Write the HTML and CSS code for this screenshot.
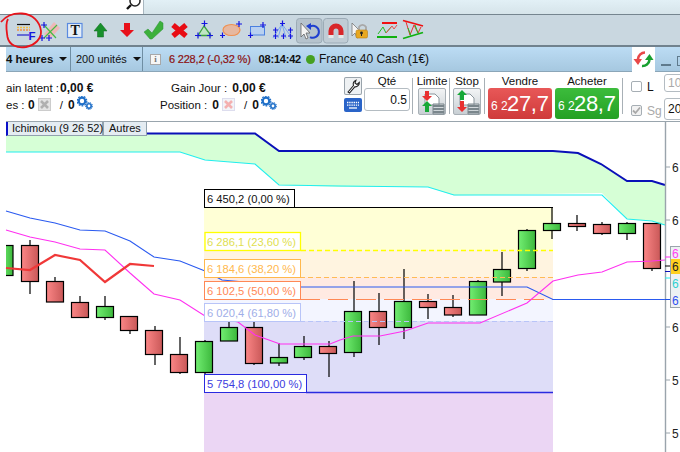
FILE: index.html
```html
<!DOCTYPE html>
<html lang="fr">
<head>
<meta charset="utf-8">
<title>Graphique France 40 Cash</title>
<link rel="stylesheet" href="styles.css">
</head>
<body>
<div class="page">
  <div class="top">
    <div class="search">
      <svg class="search-icon" viewBox="120 0 23 14" width="23" height="14"><circle cx="135" cy="1" r="5" fill="none" stroke="#222" stroke-width="1.5"/><path d="M131 5L127 9" stroke="#111" stroke-width="2.4"/></svg>
    </div>
    <div class="top-rest"></div>
  </div>

  <div class="toolbar">
    <svg class="ti" viewBox="13 15 26 30"><path d="M17 24.500H30" stroke="#111" stroke-width="1.200"/><path d="M17 27.500H30" stroke="#f5c040" stroke-width="1.500" stroke-dasharray="2 1"/><path d="M17 30H30" stroke="#f59040" stroke-width="1.500" stroke-dasharray="2 1"/><path d="M17 35H29" stroke="#2222cc" stroke-width="1.200"/><text x="28.500" y="39.500" class="ti-f">F</text></svg>
    <svg class="ti" viewBox="39 15 26 30"><path d="M44 34L54 22L60 28L50 39Z" fill="#eeb8b8"/><path d="M44 25L56 38M44 38L57 25" stroke="#44bb44" stroke-width="1.200"/><path class="plus" d="M44 22V28M41 25H47M42 35V41M39 38H45M49 35V41M46 38H52"/></svg>
    <svg class="ti" viewBox="65 15 26 30"><rect x="67.500" y="23.500" width="14.500" height="14" fill="#e6eef7" stroke="#5a8ae0" stroke-width="1.200"/><text x="70.500" y="35" class="ti-t">T</text></svg>
    <svg class="ti" viewBox="91 15 26 30"><path d="M100.500 23L107 31H103.500V37H97.500V31H94Z" fill="#18902c" stroke="#0c6a1c" stroke-width=".5"/></svg>
    <svg class="ti" viewBox="117 15 26 30"><path d="M124 23H130V30H134L127 37L120 30H124Z" fill="#e8101a"/></svg>
    <svg class="ti" viewBox="143 15 26 30"><path d="M144 32L148 29L152 33L160 21L163 23V29L152 39H150Z" fill="#3cb03c" stroke="#2a9030" stroke-width=".5"/></svg>
    <svg class="ti" viewBox="169 15 26 30"><path d="M173 25L186 36M186 25L173 36" stroke="#e80c14" stroke-width="5.400"/></svg>
    <svg class="ti" viewBox="195 15 26 30"><path d="M204 26L198 35.500H211Z" fill="#bfe6c4" stroke="#3aa040" stroke-width="1.300"/><path class="plus" d="M204.500 20.500V26.500M201.500 23.500H207.500M198 32.500V38.500M195 35.500H201M210 32.500V38.500M207 35.500H213"/></svg>
    <svg class="ti" viewBox="221 15 26 30"><ellipse cx="231.500" cy="30" rx="8.500" ry="5.500" fill="#e6b8a0" stroke="#f09050" stroke-width="1.200"/><path class="plus" d="M222.500 32.500V38M220 35.500H225M239 21V27M236 24H242"/></svg>
    <svg class="ti" viewBox="247 15 26 30"><rect x="250.500" y="26.500" width="14" height="8.500" fill="#b8d0f0" stroke="#4a80e0"/><path class="plus" d="M250.500 32.500V38M248 35.500H253M263 22V28M260 25H266"/></svg>
    <svg class="ti" viewBox="273 15 26 30"><path d="M282 24L273 38M282 24L278 38M282 24L286 38M282 24L292 38" stroke="#7aa8f0" fill="none"/><path class="plus" d="M282.500 20.500V26M280 23.500H285M275.500 27.500V33M273 30H278M290.500 27.500V33M288 30H293M275.500 33.500V39M273 36H278M283.500 33.500V39M281 36H286M290.500 33.500V39M288 36H293"/></svg>
    <svg class="ti" viewBox="299 15 26 30"><rect x="296.500" y="18.500" width="25.500" height="24.500" rx="3" fill="#b6c3cd" stroke="#9cabb6"/><path d="M301 23V37L304 34L306 39L308 38L306 33H310Z" fill="#f4f4f4" stroke="#666" stroke-width=".8"/><path d="M310 26.500A6 6 0 1 1 310 37" fill="none" stroke="#1f3fd0" stroke-width="2"/><path d="M306 26L311 23V30Z" fill="#1f3fd0"/></svg>
    <svg class="ti" viewBox="325 15 26 30"><rect x="323.500" y="18.500" width="24.500" height="24.500" rx="3" fill="#c0ccd5" stroke="#9cabb6"/><path d="M331 35V31A5 5 0 0 1 341 31V35" fill="none" stroke="#d8262a" stroke-width="5"/><path d="M331 35V38M341 35V38" stroke="#e8e8e8" stroke-width="5"/></svg>
    <svg class="ti" viewBox="351 15 26 30"><path d="M352 23V36L355 33L357 38L359 37L357 32H361Z" fill="#f4f4f4" stroke="#777" stroke-width=".8"/><path d="M359 30V27A4 4 0 0 1 366 27V30" fill="none" stroke="#a8a8a8" stroke-width="1.800"/><rect x="356" y="30" width="11.500" height="8" rx="1.500" fill="#e8a820" stroke="#b87c10" stroke-width=".6"/><circle cx="361.500" cy="33" r="1.400" fill="#222"/><path d="M361.500 33V36" stroke="#222"/></svg>
    <svg class="ti" viewBox="377 15 26 30"><path d="M382 23H397" stroke="#f01010" stroke-width="2"/><path d="M377 37H397" stroke="#10b010" stroke-width="2"/><path d="M378 34L383 27L386 33L391 27" fill="none" stroke="#22bb22"/><path d="M386 33L392 26L394 29L397 25" fill="none" stroke="#e85050"/></svg>
    <svg class="ti" viewBox="403 15 26 30"><path d="M403 20.500L423 26" stroke="#f01010" stroke-width="1.800"/><path d="M403 38.500L423 32.500" stroke="#10b010" stroke-width="1.800"/><path d="M406 22L410 35L414 25L418 33L421 27" fill="none" stroke="#e83030"/><path d="M408 28L411 36M415 25L418 33" stroke="#22bb22" fill="none"/></svg>
  </div>

  <div class="tabbar">
    <div class="seg seg-period"><b class="period-text">4 heures</b><span class="caret"></span></div>
    <div class="seg seg-units"><span class="units-text">200 unités</span><span class="caret"></span></div>
    <div class="seg seg-quote">
      <span class="info-icon">i</span>
      <span class="quote-price">6 228,2 (-0,32 %)</span>
      <b class="quote-time">08:14:42</b>
      <span class="dot"></span>
      <span class="quote-name">France 40 Cash (1€)</span>
    </div>
    <div class="refresh">
      <svg viewBox="632 47 23 25" width="23" height="25"><path d="M645 52.500A7 7 0 0 0 638 59" fill="none" stroke="#e84848" stroke-width="2.600"/><path d="M633.500 59H642L638 65Z" fill="#e84848"/><path d="M642 66A7 7 0 0 0 649.500 60" fill="none" stroke="#18a030" stroke-width="2.600"/><path d="M645 60H653.500L649.500 54Z" fill="#18a030"/></svg>
    </div>
    <div class="win-btns"><span class="min"></span><span class="max"></span></div>
  </div>

  <div class="info">
    <div class="account">
      <div class="acct-row">
        <div class="cell cell-a1"><span class="lbl-latent">ain latent :</span><b class="val">0,00 €</b></div>
        <div class="cell"><span>Gain Jour :</span><b class="val">0,00 €</b></div>
      </div>
      <div class="acct-row row2">
        <div class="cell cell-a2"><span class="lbl-es">es :</span><b class="val">0</b>
          <svg class="x-ico" viewBox="0 0 13 13" width="13" height="13"><rect x=".5" y=".5" width="12" height="12" fill="#e4e4e4" stroke="#ccc"/><path d="M3 3L10 10M10 3L3 10" stroke="#b0b0b0" stroke-width="2.600"/></svg>
          <span class="slash">/</span><b class="val0">0</b>
          <svg class="gears" viewBox="0 0 16 14" width="16" height="14"><circle cx="5" cy="5" r="3.300" fill="none" stroke="#1f6fc8" stroke-width="2.200"/><circle cx="5" cy="5" r="4.800" fill="none" stroke="#1f6fc8" stroke-width="1.200" stroke-dasharray="1.800 1.200"/><circle cx="12" cy="10" r="2.200" fill="none" stroke="#1f6fc8" stroke-width="1.600"/><circle cx="12" cy="10" r="3.500" fill="none" stroke="#1f6fc8" stroke-width="1" stroke-dasharray="1.400 1"/></svg>
        </div>
        <div class="cell"><span>Position :</span><b class="val">0</b>
          <svg class="x-ico" viewBox="0 0 13 13" width="13" height="13"><rect x=".5" y=".5" width="12" height="12" fill="#f2f4f8" stroke="#dde"/><path d="M3 3L10 10M10 3L3 10" stroke="#f4b0b0" stroke-width="2.600"/></svg>
          <span class="slash">/</span><b class="val0">0</b>
          <svg class="gears" viewBox="0 0 16 14" width="16" height="14"><circle cx="5" cy="5" r="3.300" fill="none" stroke="#1f6fc8" stroke-width="2.200"/><circle cx="5" cy="5" r="4.800" fill="none" stroke="#1f6fc8" stroke-width="1.200" stroke-dasharray="1.800 1.200"/><circle cx="12" cy="10" r="2.200" fill="none" stroke="#1f6fc8" stroke-width="1.600"/><circle cx="12" cy="10" r="3.500" fill="none" stroke="#1f6fc8" stroke-width="1" stroke-dasharray="1.400 1"/></svg>
        </div>
      </div>
    </div>

    <div class="order">
      <div class="tools">
        <span class="wrench"><svg viewBox="0 0 18 18" width="18" height="18"><path d="M4 15L9.500 8.500A4 4 0 0 1 12 3.200L11 6L13 7.500L15.300 5.500A4 4 0 0 1 10.800 9.800L5.500 16Z" fill="#fff" stroke="#222" stroke-width="1.100"/></svg></span>
        <span class="keyboard"><svg viewBox="0 0 18 14" width="18" height="14"><rect width="18" height="14" rx="2" fill="#2a64c8"/><path d="M3 4.500H15M3 7.200H15" stroke="#fff" stroke-width="1.300" stroke-dasharray="1.400 .8"/><path d="M5 10H13" stroke="#fff" stroke-width="1.300"/></svg></span>
      </div>
      <div class="col qty"><span class="col-label">Qté</span><div class="qty-input">0.5</div></div>
      <span class="sep sep-qty"></span>
      <div class="col limit"><span class="col-label">Limite</span>
        <span class="ord-btn"><svg viewBox="0 0 28 27" width="28" height="27"><path d="M7 6H17L21 10V17H7Z" fill="#fff" stroke="#8a959c"/><path d="M15 18H26M15 21H26M15 24H26" stroke="#7a868c" stroke-width="2"/><path d="M15 16H26V26H15Z" fill="none" stroke="#7a868c"/><path d="M7 3H11V8H14L9 13L4 8H7Z" fill="#e83030"/><path d="M9 13L14 18H11V24H7V18H4Z" fill="#18a838"/></svg></span>
      </div>
      <span class="sep sep-limit"></span>
      <div class="col stop"><span class="col-label">Stop</span>
        <span class="ord-btn"><svg viewBox="0 0 28 27" width="28" height="27"><path d="M7 6H17L21 10V17H7Z" fill="#fff" stroke="#8a959c"/><path d="M15 18H26M15 21H26M15 24H26" stroke="#7a868c" stroke-width="2"/><path d="M15 16H26V26H15Z" fill="none" stroke="#7a868c"/><path d="M9 2L14 7H11V12H7V7H4Z" fill="#18a838"/><path d="M7 13H11V19H14L9 24L4 19H7Z" fill="#e83030"/></svg></span>
      </div>
      <span class="sep sep-stop"></span>
      <div class="col trade sell"><span class="col-label">Vendre</span>
        <div class="price price-sell"><span class="price-small">6 2</span><span class="price-big">27,7</span></div>
      </div>
      <div class="col trade buy"><span class="col-label">Acheter</span>
        <div class="price price-buy"><span class="price-small">6 2</span><span class="price-big">28,7</span></div>
      </div>
      <span class="sep sep-trade"></span>
      <div class="checks">
        <div class="chk-row"><span class="chk"></span><span>L</span></div>
        <div class="chk-row chk-off"><span class="chk chk-on"><svg viewBox="0 0 11 11" width="11" height="11"><path d="M2 5.500L4.500 8L9 2.500" fill="none" stroke="#a9a9a9" stroke-width="1.800"/></svg></span><span>Sg</span></div>
      </div>
      <div class="inputs"><div class="num num-off">10</div><div class="num">20</div></div>
    </div>
  </div>

  <div class="chart">
    <svg class="chart-svg" viewBox="0 122 680 330" width="680" height="330">
      <defs>
        <linearGradient id="gr"><stop offset="0" stop-color="#fb8686"/><stop offset="1" stop-color="#c95858"/></linearGradient>
        <linearGradient id="gg"><stop offset="0" stop-color="#72ee72"/><stop offset="1" stop-color="#3cb83c"/></linearGradient>
      </defs>

      <path d="M6 136H147V133H255L279 151H553L578 153L601 164L627 181H652L665 185V225L652 221L627 219L602 193L454 195.500L428 187H340L279 185L255 164L205 160L180 152H6Z" fill="#d6ffd6"/>

      <rect x="204" y="207" width="349" height="43" fill="#ffffd6"/>
      <rect x="204" y="250" width="349" height="27" fill="#fff4e0"/>
      <rect x="204" y="277" width="349" height="22" fill="#ffeae2"/>
      <rect x="204" y="299" width="349" height="22" fill="#f3f5ff"/>
      <rect x="204" y="321" width="349" height="71" fill="#deddf8"/>
      <rect x="204" y="392" width="349" height="60" fill="#ebd6f4"/>

      <g stroke="#000" stroke-width="1.200">
        <path d="M30 240V294M55 277V281M80 296V302M105 296V320M130 316V334M155 326V365M180 337V374M205 340V376M229 316V327M254 316V365M279 343V366M304 336V360M329 341V377M354 281V357M379 293V345M404 269V339M428 294V319M453 295V317M478 280V315M502 252V296M527 229V271M552 207V239M577 215V231M602 222V235M627 222V240M652 223V271"/>
      </g>
      <g stroke="#000" stroke-width="1.200">
        <g fill="url(#gg)">
          <rect x="1" y="245.500" width="12" height="30"/>
          <rect x="96.500" y="306.500" width="17" height="11"/>
          <rect x="195.500" y="341.500" width="17" height="31"/>
          <rect x="220.500" y="327.500" width="17" height="13.500"/>
          <rect x="270.500" y="357.500" width="17" height="5.500"/>
          <rect x="294.500" y="346.500" width="17" height="11"/>
          <rect x="344.500" y="311.500" width="17" height="41"/>
          <rect x="394.500" y="301.500" width="17" height="26"/>
          <rect x="469.500" y="281.500" width="17" height="33.500"/>
          <rect x="493.500" y="269.500" width="17" height="12.500"/>
          <rect x="518.500" y="230.500" width="17" height="38"/>
          <rect x="543.500" y="223.500" width="17" height="7"/>
          <rect x="618.500" y="223.500" width="17" height="10"/>
        </g>
        <g fill="url(#gr)">
          <rect x="21.500" y="245.500" width="17" height="36"/>
          <rect x="46.500" y="281.500" width="17" height="20.500"/>
          <rect x="71.500" y="302.500" width="17" height="15"/>
          <rect x="120.500" y="316.500" width="17" height="14"/>
          <rect x="145.500" y="330.500" width="17" height="24"/>
          <rect x="170.500" y="354.500" width="17" height="18"/>
          <rect x="245.500" y="327.500" width="17" height="36"/>
          <rect x="319.500" y="346.500" width="17" height="7"/>
          <rect x="369.500" y="311.500" width="17" height="16"/>
          <rect x="419.500" y="301.500" width="17" height="6"/>
          <rect x="444.500" y="307.500" width="17" height="7.500"/>
          <rect x="568.500" y="223.500" width="17" height="3"/>
          <rect x="593.500" y="224.500" width="17" height="9"/>
          <rect x="643.500" y="223.500" width="17" height="45"/>
        </g>
      </g>
      <rect x="0" y="240" width="6" height="40" fill="#fff"/>

      <path d="M301 250.500H553" stroke="#ffff00" stroke-width="1.600" stroke-dasharray="5 3" fill="none"/>
      <path d="M300 277.500H553" stroke="#ffbb55" stroke-dasharray="5 3" fill="none"/>
      <path d="M300 299.500H553" stroke="#ff8855" stroke-dasharray="20 8" fill="none"/>
      <path d="M300 321.500H553" stroke="#b8c4f8" stroke-dasharray="5 3" fill="none"/>
      <path d="M306 392.500H553" stroke="#2a2ae0" stroke-width="1.300" fill="none"/>
      <path d="M204 207.500H553" stroke="#000" fill="none"/>

      <path d="M6 152H180L205 160L255 164L279 185L340 186L428 187L454 195H602L627 219L652 221L665 225" fill="none" stroke="#22eeee" stroke-width="1.100"/>
      <path d="M147 133.500H255L279 151H553L578 153L601 164L627 181H652L665 185" fill="none" stroke="#0a10b8" stroke-width="2"/>
      <path d="M6 211L30 218L55 223L80 230L105 231L130 241L154 257L180 261L205 271L222 280L300 287H527L553 299.500H665" fill="none" stroke="#2a5af0" stroke-width="1.100"/>
      <path d="M6 230L30 237L55 242L80 249L105 250L130 273L154 294L180 300L205 316L238 322L255 335L280 344H330L340 340L353 336H380L405 331L428 323H480L527 303L553 281L578 275L602 272L627 262L652 261L665 260" fill="none" stroke="#ff30f0" stroke-width="1.100"/>
      <path d="M6 268L30 270L55 255L80 260L105 282L130 264L154 266" fill="none" stroke="#f03838" stroke-width="2.200"/>

      <g class="fib-label">
        <rect x="204.500" y="189.500" width="90" height="18" fill="#fff" stroke="#000"/>
        <text x="207" y="203" fill="#111">6 450,2 (0,00 %)</text>
        <rect x="205" y="232.500" width="95.500" height="18" fill="#fff" stroke="#ffff00" stroke-width="1.300"/>
        <text x="207" y="246" fill="#e0e050">6 286,1 (23,60 %)</text>
        <rect x="204.500" y="259.500" width="96" height="18" fill="#fff" stroke="#ffb84d"/>
        <text x="207" y="273" fill="#ffb84d">6 184,6 (38,20 %)</text>
        <rect x="204.500" y="281.500" width="96" height="18" fill="#fff" stroke="#ff8855"/>
        <text x="207" y="295" fill="#ff8855">6 102,5 (50,00 %)</text>
        <rect x="204.500" y="303.500" width="96" height="18" fill="#fff" stroke="#b8c4f8"/>
        <text x="207" y="317" fill="#a0aee8">6 020,4 (61,80 %)</text>
        <rect x="204.500" y="374.500" width="102" height="18" fill="#fff" stroke="#2a2ae0"/>
        <text x="207" y="388" fill="#3c3ce0">5 754,8 (100,00 %)</text>
      </g>

      <rect x="665" y="122" width="15" height="330" fill="#fff"/>
      <path d="M665.500 122V452" stroke="#9aa4ac" stroke-width="1.400"/>
      <path d="M665 167H670M665 220H670M665 327H670M665 380H670M665 433H670" stroke="#9aa4ac"/>
      <g class="axis-text" fill="#222">
        <text x="672" y="172">6</text>
        <text x="672" y="225">6</text>
        <text x="672" y="332">6</text>
        <text x="672" y="385">5</text>
        <text x="672" y="438">5</text>
      </g>
      <path d="M665 257H670" stroke="#ff2cf0"/><path d="M665 266H670" stroke="#000"/><path d="M665 271.500H670" stroke="#0a10b8"/><path d="M665 278H670" stroke="#22eeee"/><path d="M665 299.500H670" stroke="#1c50e8"/>
      <rect x="670.500" y="246.500" width="12" height="61" fill="#eef1f3" stroke="#9aa4ac"/>
      <rect x="671" y="259" width="12" height="15" fill="#ffd020"/>
      <g class="axis-text">
        <text x="672" y="258" fill="#ff40f0">6</text>
        <text x="672" y="271" fill="#222">6</text>
        <text x="672" y="288" fill="#30d0d0">6</text>
        <text x="672" y="305" fill="#3050f0">6</text>
      </g>
    </svg>

    <div class="chart-tabs">
      <span class="chart-tab tab-ichi">Ichimoku (9 26 52)</span>
      <span class="chart-tab">Autres</span>
    </div>
  </div>

  <svg class="annotation" viewBox="0 0 60 60" width="60" height="60"><path d="M1 22C6 16 13 13 22 13.500C33 14 40 22 41 31C41.500 39 35 45 26 47C17 48.500 9 45 7.500 37C6.500 30 5 24 8 19" fill="none" stroke="#e8141c" stroke-width="1.800"/></svg>
</div>
</body>
</html>
```
FILE: styles.css
```css
* { box-sizing: border-box; }
html, body { margin: 0; padding: 0; background: #fff; }
body { font-family: "Liberation Sans", Arial, sans-serif; font-size: 12px; color: #111; }
b { font-weight: 700; }
svg { display: block; }

.page { position: relative; width: 680px; height: 452px; overflow: hidden; }

.top { display: flex; height: 15px; border-bottom: 1px solid #75858f; }
.search { width: 144px; background: #fff; border-right: 1px solid #a8b6bf; }
.search-icon { margin-left: 120px; }
.top-rest { flex: 1; background: linear-gradient(#e2f0f6, #d6e4ea); }

.toolbar { display: flex; height: 32px; padding-left: 13px; background: #c9d7e0; border-bottom: 2px solid #71828e; }
.ti { flex: none; width: 26px; height: 30px; overflow: visible; }
.plus { stroke: #1414e0; stroke-width: 1.200; fill: none; }
.ti-f { font: 700 11.500px "Liberation Sans", sans-serif; fill: #1414e0; }
.ti-t { font: 700 14px "Liberation Serif", serif; fill: #111; }

.tabbar { display: flex; height: 25px; margin-left: 6px; background: linear-gradient(#bcdcf4, #a6c8e0); border-bottom: 1px solid #8ba6b8; white-space: nowrap; }
.seg { display: flex; flex: none; align-items: center; border-right: 1px solid #6f8ea3; }
.seg-period { width: 65px; }
.period-text { font-size: 11.500px; }
.seg-units { width: 72px; padding-left: 5px; }
.units-text { font-size: 11px; }
.caret { flex: none; width: 0; height: 0; margin-left: 6px; border-left: 4px solid transparent; border-right: 4px solid transparent; border-top: 4px solid #111; }
.seg-quote { width: 489px; padding-left: 7px; border-right: 0; }
.info-icon { display: flex; justify-content: center; align-items: center; width: 11px; height: 11px; background: #f6f6f6; border: 1px solid #a8a8a8; font: 700 9px "Liberation Serif", serif; color: #777; }
.quote-price { margin-left: 8px; font-size: 11px; letter-spacing: -.2px; color: #8c1010; -webkit-text-stroke: .2px #8c1010; }
.quote-time { margin-left: 8px; font-size: 11px; letter-spacing: -.2px; }
.dot { flex: none; width: 9px; height: 9px; margin-left: 5px; border-radius: 50%; background: #46a020; }
.quote-name { margin-left: 4px; font-size: 12px; }
.refresh { flex: none; width: 23px; height: 26px; background: #fff; }
.win-btns { display: flex; flex: none; align-items: flex-end; width: 25px; padding: 0 0 5px 6px; }
.min { flex: none; width: 10px; height: 2px; background: #5f7a8c; }
.max { flex: none; width: 10px; height: 10px; margin-left: 6px; border: 1px solid #5f7a8c; }

.info { display: flex; height: 50px; margin-left: 6px; border-bottom: 1px solid #99a5ad; }
.account { flex: none; width: 336px; padding-top: 8px; }
.acct-row { display: flex; align-items: center; height: 15px; font-size: 11.500px; white-space: nowrap; }
.row2 { margin-top: 1px; height: 17px; }
.cell { display: flex; align-items: center; }
.cell-a1 { flex: none; width: 165px; }
.cell-a2 { flex: none; width: 154px; }
.lbl-latent { flex: none; width: 49px; font-size: 11.500px; }
.lbl-es { flex: none; width: 17px; }
.val { margin-left: 5px; font-size: 12px; }
.x-ico { flex: none; margin-left: 3px; }
.slash { margin-left: 9px; }
.val0 { margin-left: 5px; font-size: 12px; }
.gears { flex: none; margin-left: 2px; margin-top: -3px; }

.order { display: flex; flex: none; width: 338px; padding-left: 2px; }
.order > * { flex: none; }
.tools { display: flex; flex-direction: column; width: 18px; padding-top: 5px; }
.wrench { width: 18px; height: 18px; margin-bottom: 3px; background: #eef1f3; border-radius: 2px; box-shadow: inset 0 0 0 1px #9aa4ac; }
.keyboard { width: 18px; height: 14px; }
.col { display: flex; flex-direction: column; align-items: center; padding-top: 2px; }
.col-label { height: 14px; line-height: 14px; font-size: 11.500px; }
.qty { width: 46px; margin-left: 2px; }
.qty-input { width: 46px; height: 23px; padding-right: 2px; line-height: 23px; text-align: right; border: 1px solid #b4bcc2; border-radius: 3px; background: #fff; }
.sep { width: 1px; height: 36px; margin-top: 6px; background: #a8b0b6; }
.sep-qty { margin-left: 2px; }
.sep-limit, .sep-stop { margin-left: 3px; }
.sep-trade { margin-left: 3px; }
.limit { width: 28px; margin-left: 5px; }
.stop { width: 28px; margin-left: 3px; }
.ord-btn { width: 28px; height: 27px; background: linear-gradient(#f2f4f5, #c8cfd4); border: 1px solid #a8b0b6; border-radius: 2px; }
.ord-btn svg { margin: -1px; }
.trade { width: 64px; margin-left: 3px; }
.price { display: flex; align-items: center; width: 64px; height: 31px; padding-left: 3px; border-radius: 3px; color: #fff; }
.price-sell { background: linear-gradient(#e85858, #cf3a3a); }
.price-buy { background: linear-gradient(#3cbc3c, #24a024); }
.price-small { flex: none; font-size: 12px; width: 16px; white-space: nowrap; padding-top: 4px; }
.price-big { font-size: 22px; letter-spacing: -.3px; white-space: nowrap; }
.checks { width: 27px; margin-left: 8px; padding-top: 9px; font-size: 12px; }
.chk-row { display: flex; align-items: center; gap: 5px; height: 11px; }
.chk-off { margin-top: 13px; color: #a9a9a9; }
.chk { width: 11px; height: 11px; flex: none; background: #fff; border: 1px solid #a6aeb4; border-radius: 2px; }
.chk-on { background: #f2f2f2; }
.chk-on svg { margin: -1px; }
.inputs { width: 20px; margin-left: 6px; padding-top: 2px; }
.num { height: 22px; padding-left: 3px; line-height: 20px; background: #fff; border: 1px solid #b4bcc2; border-radius: 3px; }
.num-off { height: 18px; margin-bottom: 6px; color: #a9a9a9; line-height: 16px; }

.chart { position: relative; height: 330px; }
.chart-svg { position: absolute; left: 0; top: 0; }
.fib-label text { font: 11.200px "Liberation Sans", sans-serif; }
.axis-text text { font: 12px "Liberation Sans", sans-serif; }
.chart-tabs { position: absolute; left: 6px; top: 0; display: flex; height: 14px; font-size: 11px; white-space: nowrap; }
.chart-tab { padding: 0 5px; line-height: 13px; background: #e4ecf2; border: 1px solid #92a2ae; border-top: 0; }
.tab-ichi { width: 97px; padding-left: 4px; border-left: 2px solid #0a10c8; }
.annotation { position: absolute; left: 0; top: 0; }
```
